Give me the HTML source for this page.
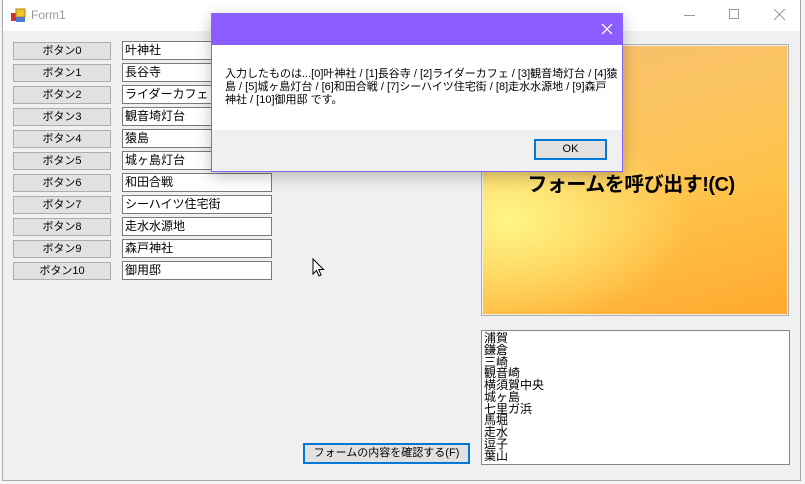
<!DOCTYPE html>
<html><head><meta charset="utf-8"><style>
*{margin:0;padding:0;box-sizing:border-box}
body{width:805px;height:484px;overflow:hidden;background:#f4f4f4;position:relative;font-family:"Liberation Sans","Noto Sans CJK JP",sans-serif;font-size:12px;color:#000}
.a{position:absolute}
.win{left:2px;top:0;width:799px;height:481px;background:#f0f0f0;border:1px solid #a8a8a8;border-top:none}
.tb{left:0;top:0;width:797px;height:31px;background:#fff}
.btn{position:absolute;left:10px;width:98px;height:18px;background:#e1e1e1;border:1px solid #adadad;text-align:center;font-size:11px;line-height:16px}
.tx{position:absolute;left:119px;width:150px;height:19px;background:#fff;border:1px solid #7a7a7a;font-size:12px;line-height:17px;padding-left:2px}
</style></head><body>
<div class="a win">
 <div class="a tb">
  <svg class="a" style="left:8px;top:8px" width="16" height="15"><rect x="0" y="5" width="6" height="8" fill="#c33"/><rect x="5" y="1" width="9" height="8" fill="#f2c230" stroke="#a80" stroke-width="1"/><rect x="5" y="9" width="9" height="5" fill="#4a7bd0"/></svg>
  <div class="a" style="left:28px;top:8px;font-size:12px;color:#999">Form1</div>
  <div class="a" style="left:681px;top:15px;width:11px;height:1px;background:#999"></div>
  <div class="a" style="left:726px;top:9px;width:10px;height:10px;border:1px solid #999"></div>
  <svg class="a" style="left:771px;top:9px" width="12" height="12"><path d="M0 0L11 11M11 0L0 11" stroke="#999" stroke-width="1"/></svg>
 </div>
 <div class="btn" style="top:42px">ボタン0</div><div class="tx" style="top:41px">叶神社</div>
 <div class="btn" style="top:64px">ボタン1</div><div class="tx" style="top:63px">長谷寺</div>
 <div class="btn" style="top:86px">ボタン2</div><div class="tx" style="top:85px">ライダーカフェ</div>
 <div class="btn" style="top:108px">ボタン3</div><div class="tx" style="top:107px">観音埼灯台</div>
 <div class="btn" style="top:130px">ボタン4</div><div class="tx" style="top:129px">猿島</div>
 <div class="btn" style="top:152px">ボタン5</div><div class="tx" style="top:151px">城ヶ島灯台</div>
 <div class="btn" style="top:174px">ボタン6</div><div class="tx" style="top:173px">和田合戦</div>
 <div class="btn" style="top:196px">ボタン7</div><div class="tx" style="top:195px">シーハイツ住宅街</div>
 <div class="btn" style="top:218px">ボタン8</div><div class="tx" style="top:217px">走水水源地</div>
 <div class="btn" style="top:240px">ボタン9</div><div class="tx" style="top:239px">森戸神社</div>
 <div class="btn" style="top:262px">ボタン10</div><div class="tx" style="top:261px">御用邸</div>
 <div class="a" style="left:478px;top:44px;width:308px;height:272px;border:1px solid #b0b0b0;padding:1px">
  <div style="width:100%;height:100%;background:radial-gradient(ellipse 60% 40% at 8% 65%,#fff585 0%,rgba(255,230,110,0) 100%),linear-gradient(165deg,#f6bd6c 0%,#fbc462 30%,#ffc24a 60%,#ffaa2e 100%);position:relative">
   <div class="a" style="left:-4px;width:100%;top:122px;text-align:center;font-weight:bold;font-size:20px;letter-spacing:-0.5px">フォームを呼び出す!(C)</div>
  </div>
 </div>
 <div class="a" style="left:478px;top:330px;width:309px;height:135px;background:#fff;border:1px solid #828790;padding:2px 0 0 2px;font-size:12px;line-height:11.75px">浦賀<br>鎌倉<br>三崎<br>観音崎<br>横須賀中央<br>城ヶ島<br>七里ガ浜<br>馬堀<br>走水<br>逗子<br>葉山</div>
 <div class="a" style="left:300px;top:443px;width:167px;height:21px;background:#e1e1e1;border:2px solid #0078d7;text-align:center;font-size:11px;line-height:17px">フォームの内容を確認する(F)</div>
 <svg class="a" style="left:309px;top:258px" width="13" height="20"><path d="M1 1L1 16L4.5 12.5L7 18L9 17L6.8 11.5L11.5 11.5Z" fill="#fff" stroke="#000" stroke-width="1"/></svg>
</div>
<div class="a" style="left:211px;top:13px;width:412px;height:159px;background:#f0f0f0;border:1px solid #8a63ff;box-shadow:0 4px 14px rgba(0,0,0,0.25)">
 <div class="a" style="left:0;top:0;width:410px;height:31px;background:#8b5cff"></div>
 <svg class="a" style="left:389px;top:9px" width="12" height="12"><path d="M1 1L11 11M11 1L1 11" stroke="#fff" stroke-width="1.3"/></svg>
 <div class="a" style="left:0;top:31px;width:410px;height:85px;background:#fff"></div>
 <div class="a" style="left:13px;top:54px;white-space:nowrap;font-size:11px;line-height:13px">入力したものは...[0]叶神社 / [1]長谷寺 / [2]ライダーカフェ / [3]観音埼灯台 / [4]猿<br>島 / [5]城ヶ島灯台 / [6]和田合戦 / [7]シーハイツ住宅街 / [8]走水水源地 / [9]森戸<br>神社 / [10]御用邸 です。</div>
 <div class="a" style="left:322px;top:125px;width:73px;height:21px;background:#e1e1e1;border:2px solid #0078d7;text-align:center;font-size:11px;line-height:17px">OK</div>
</div>
</body></html>
